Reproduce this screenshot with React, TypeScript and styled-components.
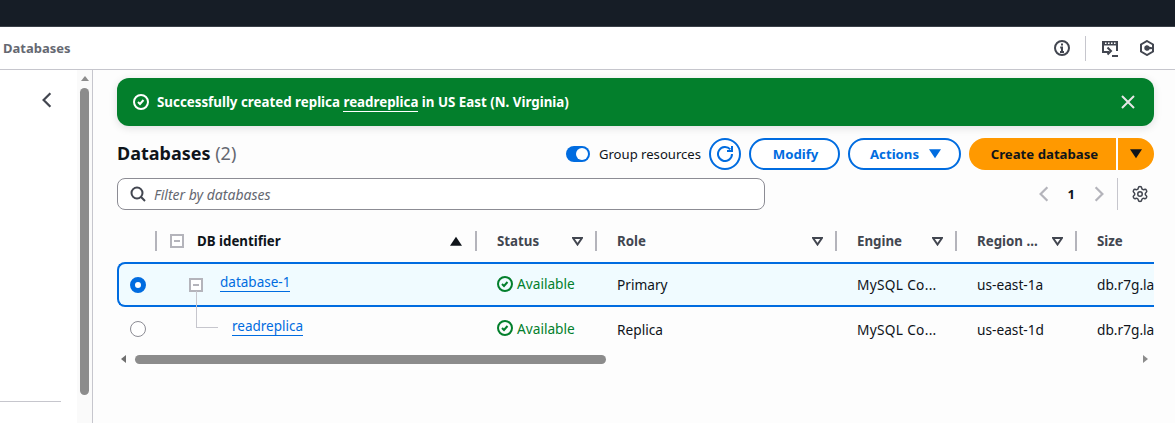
import React, { FC } from "react";
import styled, { createGlobalStyle } from "styled-components";
import { Settings } from "lucide-react";

const FONT = `"Noto Sans", "Open Sans", sans-serif`;

const GlobalStyle = createGlobalStyle`
  html, body {
    margin: 0;
    padding: 0;
    height: 100%;
    overflow: hidden;
    background: #fff;
    font-family: ${FONT};
    font-size: 14px;
    color: #0f141a;
  }
  * { box-sizing: border-box; }
`;

const CheckCircle: FC<{ size?: number }> = ({ size = 16 }) => (
  <svg width={size} height={size} viewBox="0 0 16 16" fill="none" stroke="currentColor" strokeWidth="2">
    <circle cx="8" cy="8" r="7" />
    <path d="M5 8l2 2 3.500-4" />
  </svg>
);

const InfoIcon = () => (
  <svg width="16" height="16" viewBox="0 0 16 16" fill="none" stroke="#424650" strokeWidth="2">
    <circle cx="8" cy="8" r="7" />
    <path d="M8 12V7.500H6.200M10 12H6" />
    <path d="M8 3.500v2" />
  </svg>
);

const ShellIcon = () => (
  <svg width="18" height="18" viewBox="0 0 18 18" fill="none" stroke="#424650" strokeWidth="2">
    <path d="M8 13H2V3h14v9" />
    <rect x="1" y="2" width="16" height="4.500" fill="#424650" stroke="none" />
    <path d="M4 4.200h1.500M7 4.200h1.500M10 4.200h1.500M13 4.200h1.500" stroke="#fff" strokeWidth="1.400" />
    <path d="M6.500 8.500 10 12l-3.500 3.500M11 17h6" />
  </svg>
);

const HexIcon = () => (
  <svg width="16" height="16" viewBox="0 0 16 16" fill="none" stroke="#424650" strokeWidth="2">
    <path d="M8 1 14 4.500v7L8 15l-6-3.500v-7z" />
    <path d="M5.200 8a2.800 2.800 0 0 1 5.300-1.300L14 7.600v1.500l-3.500 .2A2.800 2.800 0 0 1 5.200 8z" fill="#424650" stroke="none" />
  </svg>
);

const RefreshIcon = () => (
  <svg width="16" height="16" viewBox="0 0 16 16" fill="none" stroke="currentColor" strokeWidth="2">
    <path d="M10 5h5V0" />
    <path d="M15 8a7 7 0 1 1-1.720-4.590" />
  </svg>
);

const CloseIcon = () => (
  <svg width="16" height="16" viewBox="0 0 16 16" fill="none" stroke="#e6e6e6" strokeWidth="2">
    <path d="M2 2l12 12M14 2 2 14" />
  </svg>
);

const SearchIcon = () => (
  <svg width="16" height="16" viewBox="0 0 16 16" fill="none" stroke="currentColor" strokeWidth="2">
    <circle cx="7" cy="7" r="5.500" />
    <path d="M15 15l-4.200-4.200" />
  </svg>
);

const Angle: FC<{ right?: boolean }> = ({ right }) => (
  <svg width="18" height="18" viewBox="0 0 16 16" fill="none" stroke="currentColor" strokeWidth="2">
    <path d={right ? "M5 2l6 6-6 6" : "M11 2 5 8l6 6"} />
  </svg>
);

const Caret: FC<{ up?: boolean }> = ({ up }) => (
  <svg width="12" height="10" viewBox="0 0 10 8" fill="currentColor">
    <path d={up ? "M5 0.500 10 8H0z" : "M0 0h10L5 7.500z"} />
  </svg>
);

const FilterCaret = () => (
  <svg width="11" height="9" viewBox="0 0 11 9" fill="none" stroke="#424650" strokeWidth="2">
    <path d="M1 1h9L5.500 7.500z" />
  </svg>
);

const TopBar = styled.div`
  height: 27px;
  background: #161d26;
  border-bottom: 1px solid #3a4048;
`;

const BreadcrumbBar = styled.div`
  height: 43px;
  display: flex;
  align-items: center;
  justify-content: space-between;
  padding: 0 20px 0 3px;
  background: #fff;
  border-bottom: 1px solid #c6c6cd;
`;

const Crumb = styled.span`
  font-size: 13px;
  font-weight: 700;
  color: #656871;
`;

const Tools = styled.div`
  display: flex;
  align-items: center;
`;

const ToolButton = styled.span<{ $divided?: boolean }>`
  display: flex;
  align-items: center;
  height: 25px;
  padding-right: ${(p) => (p.$divided ? "15px" : "0")};
  margin-right: ${(p) => (p.$divided ? "15px" : "0")};
  border-right: ${(p) => (p.$divided ? "1px solid #c6c6cd" : "none")};
`;

const ToolGap = styled.span`
  width: 20px;
`;

const Body = styled.div`
  display: grid;
  grid-template-columns: 77px 16px 1fr;
  height: 353px;
`;

const SideNav = styled.div`
  display: flex;
  flex-direction: column;
  align-items: flex-end;
  padding: 21px 0 0;
  background: #fff;
`;

const CollapseButton = styled.span`
  display: flex;
  margin-right: 21px;
  color: #424650;
`;

const NavRule = styled.div`
  width: 61px;
  height: 1px;
  margin: 292px 16px 0 0;
  background: #c6c6cd;
`;

const VScroll = styled.div`
  display: flex;
  flex-direction: column;
  align-items: center;
  padding-top: 6px;
  background: #fafafa;
  border-right: 1px solid #c6c6cd;
`;

const ScrollArrow = styled.span<{ $dir: "up" | "left" | "right" }>`
  display: block;
  width: 0;
  height: 0;
  border-style: solid;
  border-color: transparent;
  ${(p) =>
    p.$dir === "up"
      ? "border-width: 0 4px 5px; border-bottom-color: #8c8c8c;"
      : p.$dir === "left"
        ? "border-width: 4px 5px 4px 0; border-right-color: #6f6f6f;"
        : "border-width: 4px 0 4px 5px; border-left-color: #8c8c8c;"}
`;

const VThumb = styled.div`
  width: 9px;
  height: 307px;
  margin-top: 7px;
  margin-right: 1px;
  border-radius: 5px;
  background: #8c8c8c;
`;

const Main = styled.main`
  padding: 8px 21px 0 24px;
  background: #fdfdfd;
  min-width: 0;
`;

const Flash = styled.div`
  height: 48px;
  display: flex;
  align-items: center;
  gap: 8px;
  padding: 0 18px 0 16px;
  border-radius: 12px;
  background: #037f2c;
  color: #fff;
  font-weight: 700;
  font-size: 13.33px;
  box-shadow: 0 2px 8px rgba(0, 7, 22, 0.12);
`;

const FlashText = styled.span`
  flex: 1;
`;

const FlashLink = styled.span`
  border-bottom: 1px solid #fff;
`;

const Header = styled.div`
  height: 32px;
  margin-top: 12px;
  display: flex;
  align-items: center;
  justify-content: space-between;
`;

const Title = styled.h1`
  margin: 0 0 3px;
  font-size: 18px;
  font-weight: 700;
  color: #0f141a;
`;

const Count = styled.span`
  font-weight: 400;
  color: #656871;
`;

const Actions = styled.div`
  display: flex;
  align-items: center;
`;

const Toggle = styled.span`
  position: relative;
  width: 24px;
  height: 16px;
  border-radius: 8px;
  background: #006ce0;
  &::after {
    content: "";
    position: absolute;
    top: 2px;
    right: 2px;
    width: 12px;
    height: 12px;
    border-radius: 50%;
    background: #fff;
  }
`;

const ToggleLabel = styled.span`
  margin: 0 8px 0 9px;
  font-size: 13.1px;
  color: #0f141a;
`;

const OutlineButton = styled.span<{ $width: number; $round?: boolean }>`
  display: flex;
  align-items: center;
  justify-content: center;
  gap: 10px;
  width: ${(p) => p.$width}px;
  height: 32px;
  margin-left: ${(p) => (p.$round ? "0" : "8px")};
  padding-left: ${(p) => (p.$round ? "0" : "2px")};
  border: 2px solid #006ce0;
  border-radius: ${(p) => (p.$round ? "50%" : "16px")};
  color: #006ce0;
  font-size: 13.2px;
  font-weight: 700;
  background: #fff;
`;

const SplitButton = styled.div`
  display: flex;
  margin-left: 8px;
  gap: 2px;
`;

const PrimaryButton = styled.span`
  display: flex;
  align-items: center;
  justify-content: center;
  width: 147px;
  height: 32px;
  padding-left: 4px;
  border-radius: 16px 0 0 16px;
  background: #ff9900;
  color: #0f141a;
  font-size: 13.2px;
  font-weight: 700;
`;

const CaretButton = styled.span`
  display: flex;
  align-items: center;
  justify-content: center;
  width: 36px;
  height: 32px;
  border-radius: 0 16px 16px 0;
  background: #ff9900;
  color: #0f141a;
`;

const FilterRow = styled.div`
  height: 32px;
  margin-top: 8px;
  display: flex;
  align-items: center;
  justify-content: space-between;
`;

const FilterBox = styled.div`
  width: 648px;
  height: 32px;
  display: flex;
  align-items: center;
  gap: 8px;
  padding-left: 12px;
  border: 1px solid #8c8c94;
  border-radius: 8px;
  background: #fff;
  color: #424650;
`;

const Placeholder = styled.span`
  font-size: 14px;
  font-style: italic;
  color: #656871;
`;

const Pager = styled.div`
  display: flex;
  align-items: center;
  height: 32px;
  color: #b4b4bb;
`;

const PageNumber = styled.span`
  margin: 0 15px;
  font-size: 13px;
  font-weight: 700;
  color: #0f141a;
`;

const PagerSettings = styled.span`
  display: flex;
  align-items: center;
  height: 32px;
  margin-left: 9px;
  padding: 0 5px 0 13px;
  border-left: 1px solid #c6c6cd;
  color: #424650;
`;

const Table = styled.div`
  margin-top: 16px;
  overflow: hidden;
`;

const COLUMNS = "38px 320px 120px 240px 120px 120px 120px";

const HeadRow = styled.div`
  display: grid;
  grid-template-columns: ${COLUMNS};
  height: 36px;
  padding-bottom: 6px;
  align-items: center;
`;

const HeadCell = styled.div`
  display: flex;
  align-items: center;
  justify-content: space-between;
  height: 20px;
  padding: 0 12px 0 20px;
  border-left: 2px solid #b4b4bb;
  font-size: 13.3px;
  font-weight: 700;
  color: #424650;
  white-space: nowrap;
`;

const HeadIdentifier = styled(HeadCell)`
  padding: 0 13px 0 13px;
  color: #0f141a;
`;

const HeadLabel = styled.span`
  display: flex;
  align-items: center;
  gap: 13px;
`;

const HeadSpacer = styled.div``;

const TreeBox = styled.span`
  display: flex;
  align-items: center;
  justify-content: center;
  width: 14px;
  height: 14px;
  border: 2px solid #b4b4bb;
  background: #fff;
  &::after {
    content: "";
    width: 6px;
    height: 2px;
    background: #b4b4bb;
  }
`;

const Row = styled.div<{ $selected?: boolean }>`
  position: relative;
  display: grid;
  grid-template-columns: ${COLUMNS};
  align-items: center;
  height: ${(p) => (p.$selected ? "45px" : "44px")};
  border: ${(p) => (p.$selected ? "2px solid #006ce0" : "none")};
  border-right: none;
  border-radius: ${(p) => (p.$selected ? "8px 0 0 8px" : "0")};
  margin-right: ${(p) => (p.$selected ? "-100px" : "0")};
  background: ${(p) => (p.$selected ? "#f0fbff" : "transparent")};
  padding-left: ${(p) => (p.$selected ? "0" : "2px")};
  font-size: 13.7px;
  color: #0f141a;
`;

const Radio = styled.span<{ $on?: boolean }>`
  justify-self: start;
  margin-left: 11px;
  width: 16px;
  height: 16px;
  border-radius: 50%;
  background: #fff;
  border: ${(p) => (p.$on ? "5px solid #006ce0" : "1px solid #8c8c94")};
`;

const NameCell = styled.div<{ $indent: number }>`
  display: flex;
  align-items: center;
  gap: 17px;
  padding-left: ${(p) => p.$indent}px;
`;

const NameLink = styled.span<{ $selected?: boolean }>`
  color: #006ce0;
  font-size: 13.5px;
  line-height: 17px;
  border-bottom: 1px solid #006ce0;
  margin-top: ${(p) => (p.$selected ? "-3px" : "-5px")};
`;

const TreeLine = styled.span`
  position: absolute;
  left: 79px;
  top: -16px;
  width: 22px;
  height: 37px;
  border-left: 1px solid #c6c6cd;
  border-bottom: 1px solid #c6c6cd;
`;

const StatusCell = styled.div`
  display: flex;
  align-items: center;
  gap: 4px;
  padding: 0 0 2px 20px;
  color: #037f2c;
`;

const Cell = styled.div`
  padding-left: 20px;
  white-space: nowrap;
  overflow: hidden;
`;

const EngineCell = styled(Cell)`
  letter-spacing: 0.3px;
`;

const HScroll = styled.div`
  display: flex;
  align-items: center;
  height: 12px;
  margin-top: 2px;
  padding: 0 6px 0 4px;
`;

const HThumb = styled.div`
  width: 471px;
  height: 9px;
  margin-left: 9px;
  border-radius: 5px;
  background: #8c8c8c;
`;

const ScrollSpacer = styled.div`
  flex: 1;
`;

type DbRow = {
  name: string;
  role: string;
  region: string;
  selected?: boolean;
};

const rows: DbRow[] = [
  { name: "database-1", role: "Primary", region: "us-east-1a", selected: true },
  { name: "readreplica", role: "Replica", region: "us-east-1d" },
];

const heads = ["Status", "Role", "Engine", "Region ..."];

const App: FC = () => (
  <>
    <GlobalStyle />
    <TopBar />
    <BreadcrumbBar>
      <Crumb>Databases</Crumb>
      <Tools>
        <ToolButton $divided>
          <InfoIcon />
        </ToolButton>
        <ShellIcon />
        <ToolGap />
        <HexIcon />
      </Tools>
    </BreadcrumbBar>
    <Body>
      <SideNav>
        <CollapseButton>
          <Angle />
        </CollapseButton>
        <NavRule />
      </SideNav>
      <VScroll>
        <ScrollArrow $dir="up" />
        <VThumb />
      </VScroll>
      <Main>
        <Flash>
          <CheckCircle />
          <FlashText>
            Successfully created replica <FlashLink>readreplica</FlashLink> in US East (N. Virginia)
          </FlashText>
          <CloseIcon />
        </Flash>
        <Header>
          <Title>
            Databases <Count>(2)</Count>
          </Title>
          <Actions>
            <Toggle />
            <ToggleLabel>Group resources</ToggleLabel>
            <OutlineButton $width={32} $round>
              <RefreshIcon />
            </OutlineButton>
            <OutlineButton $width={91}>Modify</OutlineButton>
            <OutlineButton $width={113}>
              Actions <Caret />
            </OutlineButton>
            <SplitButton>
              <PrimaryButton>Create database</PrimaryButton>
              <CaretButton>
                <Caret />
              </CaretButton>
            </SplitButton>
          </Actions>
        </Header>
        <FilterRow>
          <FilterBox>
            <SearchIcon />
            <Placeholder>Filter by databases</Placeholder>
          </FilterBox>
          <Pager>
            <Angle />
            <PageNumber>1</PageNumber>
            <Angle right />
            <PagerSettings>
              <Settings size={18} strokeWidth={2} />
            </PagerSettings>
          </Pager>
        </FilterRow>
        <Table>
          <HeadRow>
            <HeadSpacer />
            <HeadIdentifier>
              <HeadLabel>
                <TreeBox />
                DB identifier
              </HeadLabel>
              <Caret up />
            </HeadIdentifier>
            {heads.map((label) => (
              <HeadCell key={label}>
                {label}
                <FilterCaret />
              </HeadCell>
            ))}
            <HeadCell>Size</HeadCell>
          </HeadRow>
          {rows.map((r) => (
            <Row key={r.name} $selected={r.selected}>
              <Radio $on={r.selected} />
              <NameCell $indent={r.selected ? 32 : 75}>
                {r.selected && <TreeBox />}
                <NameLink $selected={r.selected}>{r.name}</NameLink>
              </NameCell>
              {!r.selected && <TreeLine />}
              <StatusCell>
                <CheckCircle />
                Available
              </StatusCell>
              <Cell>{r.role}</Cell>
              <EngineCell>MySQL Co...</EngineCell>
              <Cell>{r.region}</Cell>
              <Cell>db.r7g.large</Cell>
            </Row>
          ))}
          <HScroll>
            <ScrollArrow $dir="left" />
            <HThumb />
            <ScrollSpacer />
            <ScrollArrow $dir="right" />
          </HScroll>
        </Table>
      </Main>
    </Body>
  </>
);

export default App;
